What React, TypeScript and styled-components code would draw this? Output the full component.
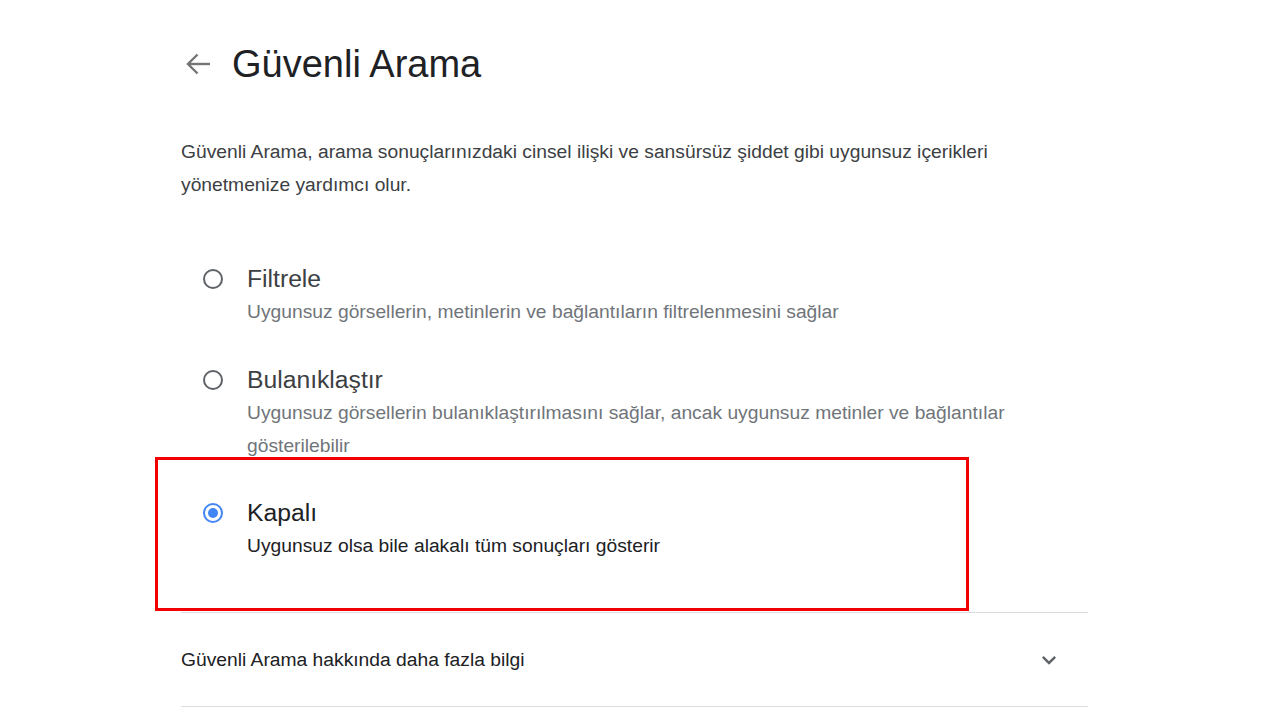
import React from "react";
import styled, { createGlobalStyle } from "styled-components";

const Global = createGlobalStyle`
  html, body { margin: 0; padding: 0; background: #fff; }
  body { font-family: "Liberation Sans", Arial, sans-serif; color: #202124; }
`;

const Page = styled.div`
  width: 907px;
  margin-left: 181px;
  padding-top: 40px;
  display: flex;
  flex-direction: column;
`;

const Header = styled.div`
  display: flex;
  align-items: center;
  height: 48px;
  gap: 22px;
  margin-left: 4px;
`;

const BackButton = styled.button`
  width: 26px;
  height: 24px;
  padding: 0;
  border: 0;
  background: none;
  display: flex;
  align-items: center;
  justify-content: center;
  color: #757575;
`;

const Title = styled.h1`
  margin: 0 0 0 -1px;
  font-size: 38px;
  font-weight: 400;
  color: #202124;
  line-height: 46px;
`;

const Intro = styled.p`
  margin: 47px 0 0;
  font-size: 19.25px;
  line-height: 33px;
  color: #3c4043;
`;

const Options = styled.div`
  margin-top: 62px;
  display: flex;
  flex-direction: column;
  gap: 35.5px;
`;

const OptionWrap = styled.div`
  position: relative;
`;

const Option = styled.label`
  display: flex;
  align-items: flex-start;
  gap: 24px;
  padding-left: 22px;
  cursor: pointer;
`;

const Radio = styled.span<{ $checked?: boolean }>`
  flex: none;
  box-sizing: border-box;
  width: 20px;
  height: 20px;
  margin-top: 6px;
  border-radius: 50%;
  border: 2px solid ${(p) => (p.$checked ? "#4285f4" : "#5f6368")};
  display: flex;
  align-items: center;
  justify-content: center;
  &::after {
    content: "";
    width: 10px;
    height: 10px;
    border-radius: 50%;
    background: #4285f4;
    display: ${(p) => (p.$checked ? "block" : "none")};
  }
`;

const OptionText = styled.div`
  display: flex;
  flex-direction: column;
`;

const OptionTitle = styled.div<{ $active?: boolean }>`
  font-size: 24.7px;
  line-height: 32px;
  color: ${(p) => (p.$active ? "#202124" : "#3c4043")};
`;

const OptionDesc = styled.div<{ $active?: boolean }>`
  font-size: 19.25px;
  line-height: 33px;
  color: ${(p) => (p.$active ? "#202124" : "#70757a")};
  max-width: 770px;
`;

const Highlight = styled.div`
  position: absolute;
  left: -26px;
  top: -40px;
  width: 814px;
  height: 154px;
  box-sizing: border-box;
  border: 3px solid #f20000;
  pointer-events: none;
`;

const Accordion = styled.div`
  margin-top: 50px;
  border-top: 1px solid #dadce0;
  border-bottom: 1px solid #dadce0;
  height: 93px;
  display: flex;
  align-items: center;
  justify-content: space-between;
  padding-right: 25px;
`;

const AccordionLabel = styled.span`
  font-size: 19.25px;
  color: #202124;
`;

const ArrowBack = () => (
  <svg width="26" height="24" viewBox="0 0 26 24" fill="none" stroke="currentColor" strokeWidth="2.4">
    <path d="M25 12H3.5" />
    <path d="M12.5 2.5L3 12l9.5 9.5" />
  </svg>
);

const ExpandMore = () => (
  <svg width="28" height="28" viewBox="0 0 24 24" fill="#5f6368">
    <path d="M16.59 8.59L12 13.17 7.41 8.59 6 10l6 6 6-6z" />
  </svg>
);

const opts = [
  {
    t: "Filtrele",
    d: "Uygunsuz görsellerin, metinlerin ve bağlantıların filtrelenmesini sağlar",
  },
  {
    t: "Bulanıklaştır",
    d: "Uygunsuz görsellerin bulanıklaştırılmasını sağlar, ancak uygunsuz metinler ve bağlantılar gösterilebilir",
  },
  {
    t: "Kapalı",
    d: "Uygunsuz olsa bile alakalı tüm sonuçları gösterir",
    active: true,
  },
];

export default function App() {
  return (
    <>
      <Global />
      <Page>
        <Header>
          <BackButton aria-label="Geri">
            <ArrowBack />
          </BackButton>
          <Title>Güvenli Arama</Title>
        </Header>
        <Intro>
          Güvenli Arama, arama sonuçlarınızdaki cinsel ilişki ve sansürsüz şiddet gibi uygunsuz içerikleri
          yönetmenize yardımcı olur.
        </Intro>
        <Options>
          {opts.map((o) => (
            <OptionWrap key={o.t}>
              <Option>
                <Radio $checked={o.active} />
                <OptionText>
                  <OptionTitle $active={o.active}>{o.t}</OptionTitle>
                  <OptionDesc $active={o.active}>{o.d}</OptionDesc>
                </OptionText>
              </Option>
              {o.active && <Highlight />}
            </OptionWrap>
          ))}
        </Options>
        <Accordion>
          <AccordionLabel>Güvenli Arama hakkında daha fazla bilgi</AccordionLabel>
          <ExpandMore />
        </Accordion>
      </Page>
    </>
  );
}
